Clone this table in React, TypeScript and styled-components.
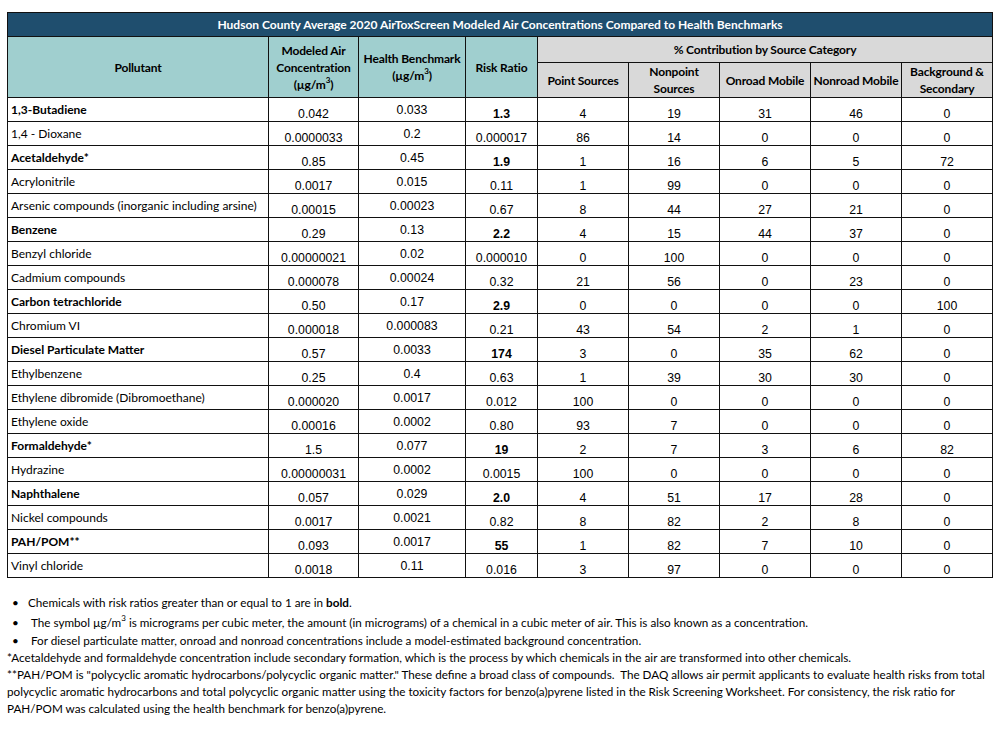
import React from 'react';
import styled, { createGlobalStyle } from 'styled-components';

const Global = createGlobalStyle`
  html, body { margin: 0; padding: 0; background: #ffffff; }
  body { font-family: Lato, "Liberation Sans", sans-serif; color: #000; }
`;

const Page = styled.div`
  padding: 12px 0 0 7px;
  width: 994px;
`;

const Table = styled.table`
  border-collapse: collapse;
  table-layout: fixed;
  width: 986px;
`;

const TitleCell = styled.th`
  height: 23px;
  padding: 0;
  background: #1f4e6e;
  color: #ffffff;
  font-family: Lato, "Liberation Sans", sans-serif;
  font-weight: 700;
  font-size: 12px;
  line-height: 16px;
  text-align: center;
  border: 1px solid #111;
`;

const HeadCell = styled.th<{ $tone: 'teal' | 'gray' }>`
  padding: 0 1px;
  background: ${(p) => (p.$tone === 'teal' ? '#a0cfcf' : '#d9d9d9')};
  font-family: Lato, "Liberation Sans", sans-serif;
  font-weight: 700;
  font-size: 12px;
  letter-spacing: -0.15px;
  line-height: 17px;
  text-align: center;
  vertical-align: middle;
  white-space: nowrap;
  border: 1px solid #111;
`;

const Sup = styled.sup`
  font-size: 8px;
  line-height: 0;
  vertical-align: 6px;
`;

const HeadRow = styled.tr<{ $h: number }>`
  height: ${(p) => p.$h}px;
`;

const DataRow = styled.tr`
  height: 24px;
`;

const NameCell = styled.td<{ $bold?: boolean }>`
  padding: 0 3px 0 3px;
  font-family: Lato, "Liberation Sans", sans-serif;
  font-size: 12px;
  line-height: 15px;
  font-weight: ${(p) => (p.$bold ? 700 : 400)};
  white-space: nowrap;
  overflow: hidden;
  vertical-align: middle;
  border: 1px solid #111;
`;

const NumCell = styled.td<{ $bold?: boolean; $low?: boolean }>`
  padding: 0 2px;
  font-family: "Liberation Sans", Arial, sans-serif;
  font-size: 12.3px;
  line-height: 14px;
  font-weight: ${(p) => (p.$bold ? 700 : 400)};
  text-align: center;
  vertical-align: ${(p) => (p.$low ? 'bottom' : 'middle')};
  white-space: nowrap;
  border: 1px solid #111;
`;

const Notes = styled.div`
  margin-top: 15px;
  font-family: Lato, "Liberation Sans", sans-serif;
  font-size: 11.7px;
  line-height: 17px;
  white-space: nowrap;
`;

const BulletList = styled.ul`
  list-style: none;
  margin: 0;
  padding: 0;
`;

const BulletItem = styled.li<{ $indent?: boolean; $tall?: boolean }>`
  display: grid;
  grid-template-columns: 21px 1fr;
  line-height: 18px;
  padding-top: ${(p) => (p.$tall ? 2 : 0)}px;
  & > span:last-child {
    padding-left: ${(p) => (p.$indent ? 3 : 0)}px;
  }
`;

const BulletMark = styled.span`
  padding-left: 5px;
`;

const Footnote = styled.p`
  margin: 0;
`;

type Row = {
  name: string;
  bold?: boolean;
  conc: string;
  bench: string;
  ratio: string;
  src: [string, string, string, string, string];
};

const rows: Row[] = [
  { name: '1,3-Butadiene', bold: true, conc: '0.042', bench: '0.033', ratio: '1.3', src: ['4', '19', '31', '46', '0'] },
  { name: '1,4 - Dioxane', conc: '0.0000033', bench: '0.2', ratio: '0.000017', src: ['86', '14', '0', '0', '0'] },
  { name: 'Acetaldehyde*', bold: true, conc: '0.85', bench: '0.45', ratio: '1.9', src: ['1', '16', '6', '5', '72'] },
  { name: 'Acrylonitrile', conc: '0.0017', bench: '0.015', ratio: '0.11', src: ['1', '99', '0', '0', '0'] },
  { name: 'Arsenic compounds (inorganic including arsine)', conc: '0.00015', bench: '0.00023', ratio: '0.67', src: ['8', '44', '27', '21', '0'] },
  { name: 'Benzene', bold: true, conc: '0.29', bench: '0.13', ratio: '2.2', src: ['4', '15', '44', '37', '0'] },
  { name: 'Benzyl chloride', conc: '0.00000021', bench: '0.02', ratio: '0.000010', src: ['0', '100', '0', '0', '0'] },
  { name: 'Cadmium compounds', conc: '0.000078', bench: '0.00024', ratio: '0.32', src: ['21', '56', '0', '23', '0'] },
  { name: 'Carbon tetrachloride', bold: true, conc: '0.50', bench: '0.17', ratio: '2.9', src: ['0', '0', '0', '0', '100'] },
  { name: 'Chromium VI', conc: '0.000018', bench: '0.000083', ratio: '0.21', src: ['43', '54', '2', '1', '0'] },
  { name: 'Diesel Particulate Matter', bold: true, conc: '0.57', bench: '0.0033', ratio: '174', src: ['3', '0', '35', '62', '0'] },
  { name: 'Ethylbenzene', conc: '0.25', bench: '0.4', ratio: '0.63', src: ['1', '39', '30', '30', '0'] },
  { name: 'Ethylene dibromide (Dibromoethane)', conc: '0.000020', bench: '0.0017', ratio: '0.012', src: ['100', '0', '0', '0', '0'] },
  { name: 'Ethylene oxide', conc: '0.00016', bench: '0.0002', ratio: '0.80', src: ['93', '7', '0', '0', '0'] },
  { name: 'Formaldehyde*', bold: true, conc: '1.5', bench: '0.077', ratio: '19', src: ['2', '7', '3', '6', '82'] },
  { name: 'Hydrazine', conc: '0.00000031', bench: '0.0002', ratio: '0.0015', src: ['100', '0', '0', '0', '0'] },
  { name: 'Naphthalene', bold: true, conc: '0.057', bench: '0.029', ratio: '2.0', src: ['4', '51', '17', '28', '0'] },
  { name: 'Nickel compounds', conc: '0.0017', bench: '0.0021', ratio: '0.82', src: ['8', '82', '2', '8', '0'] },
  { name: 'PAH/POM**', bold: true, conc: '0.093', bench: '0.0017', ratio: '55', src: ['1', '82', '7', '10', '0'] },
  { name: 'Vinyl chloride', conc: '0.0018', bench: '0.11', ratio: '0.016', src: ['3', '97', '0', '0', '0'] },
];

const colWidths = [261, 90, 107, 72, 91, 91, 91, 91, 91];

export default function App() {
  return (
    <>
      <Global />
      <Page>
        <Table>
          <colgroup>
            {colWidths.map((w, i) => (
              <col key={i} style={{ width: w }} />
            ))}
          </colgroup>
          <thead>
            <tr>
              <TitleCell colSpan={9}>
                Hudson County Average 2020 AirToxScreen Modeled Air Concentrations Compared to Health Benchmarks
              </TitleCell>
            </tr>
            <HeadRow $h={26}>
              <HeadCell $tone="teal" rowSpan={2}>Pollutant</HeadCell>
              <HeadCell $tone="teal" rowSpan={2}>
                Modeled Air
                <br />
                Concentration
                <br />
                (µg/m<Sup>3</Sup>)
              </HeadCell>
              <HeadCell $tone="teal" rowSpan={2}>
                Health Benchmark
                <br />
                (µg/m<Sup>3</Sup>)
              </HeadCell>
              <HeadCell $tone="teal" rowSpan={2}>Risk Ratio</HeadCell>
              <HeadCell $tone="gray" colSpan={5}>% Contribution by Source Category</HeadCell>
            </HeadRow>
            <HeadRow $h={33}>
              <HeadCell $tone="gray">Point Sources</HeadCell>
              <HeadCell $tone="gray">
                Nonpoint
                <br />
                Sources
              </HeadCell>
              <HeadCell $tone="gray">Onroad Mobile</HeadCell>
              <HeadCell $tone="gray">Nonroad Mobile</HeadCell>
              <HeadCell $tone="gray">
                Background &amp;
                <br />
                Secondary
              </HeadCell>
            </HeadRow>
          </thead>
          <tbody>
            {rows.map((r) => (
              <DataRow key={r.name}>
                <NameCell $bold={r.bold}>{r.name}</NameCell>
                <NumCell $low>{r.conc}</NumCell>
                <NumCell>{r.bench}</NumCell>
                <NumCell $low $bold={r.bold}>{r.ratio}</NumCell>
                {r.src.map((v, i) => (
                  <NumCell $low key={i}>{v}</NumCell>
                ))}
              </DataRow>
            ))}
          </tbody>
        </Table>
        <Notes>
          <BulletList>
            <BulletItem>
              <BulletMark>•</BulletMark>
              <span>
                Chemicals with risk ratios greater than or equal to 1 are in <b>bold</b>.
              </span>
            </BulletItem>
            <BulletItem $indent $tall>
              <BulletMark>•</BulletMark>
              <span>
                The symbol µg/m<Sup>3</Sup> is micrograms per cubic meter, the amount (in micrograms) of a chemical in a cubic meter of air. This is also known as a concentration.
              </span>
            </BulletItem>
            <BulletItem $indent>
              <BulletMark>•</BulletMark>
              <span>
                For diesel particulate matter, onroad and nonroad concentrations include a model-estimated background concentration.
              </span>
            </BulletItem>
          </BulletList>
          <Footnote>
            *Acetaldehyde and formaldehyde concentration include secondary formation, which is the process by which chemicals in the air are transformed into other chemicals.
          </Footnote>
          <Footnote>
            **PAH/POM is "polycyclic aromatic hydrocarbons/polycyclic organic matter." These define a broad class of compounds.{'\u00a0'} The DAQ allows air permit applicants to evaluate health risks from total
            <br />
            polycyclic aromatic hydrocarbons and total polycyclic organic matter using the toxicity factors for benzo(a)pyrene listed in the Risk Screening Worksheet. For consistency, the risk ratio for
            <br />
            PAH/POM was calculated using the health benchmark for benzo(a)pyrene.
          </Footnote>
        </Notes>
      </Page>
    </>
  );
}
